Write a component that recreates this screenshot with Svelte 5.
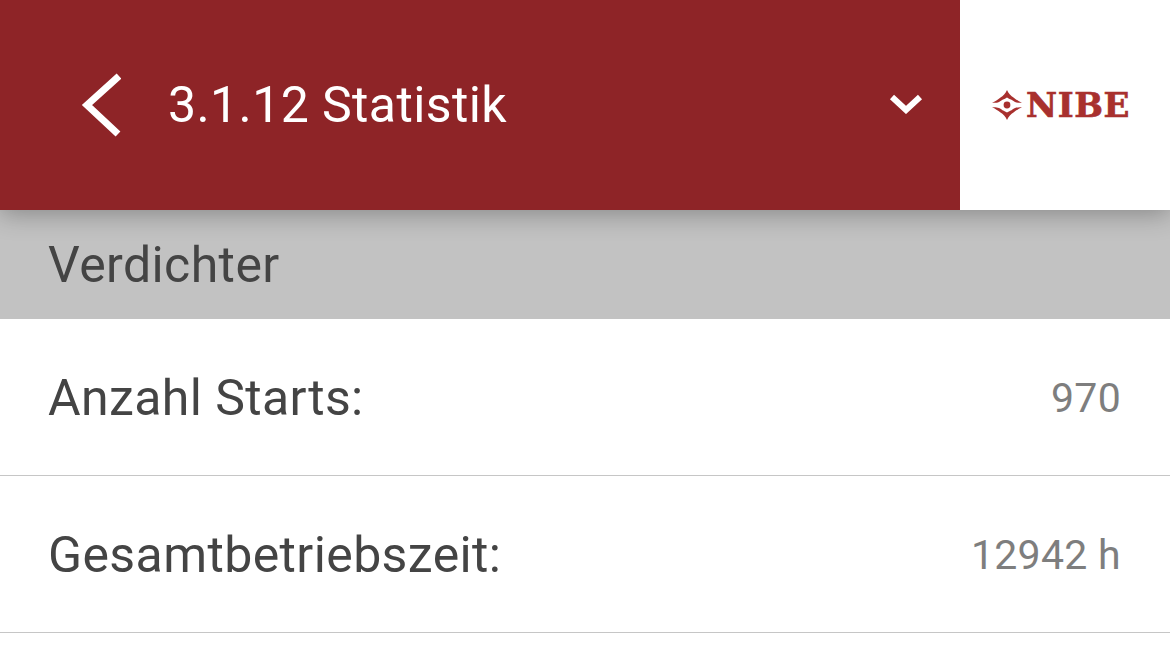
<script>
  const rows = [
    { label: 'Anzahl Starts:', value: '970' },
    { label: 'Gesamtbetriebszeit:', value: '12942 h' }
  ];
</script>

<div class="page">
  <header class="header">
    <div class="bar">
      <svg class="back" width="40" height="64" viewBox="0 0 40 64" aria-hidden="true">
        <path d="M38 3 L6 32 L37 61" fill="none" stroke="#fff" stroke-width="7" />
      </svg>
      <h1 class="title">3.1.12 Statistik</h1>
      <svg class="chevron" width="34" height="20" viewBox="0 0 34 20" aria-hidden="true">
        <path d="M3 3 L17 16 L31 3" fill="none" stroke="#fff" stroke-width="6" />
      </svg>
    </div>
    <div class="brand">
      <svg class="mark" width="30" height="30" viewBox="0 0 30 30" aria-hidden="true">
        <g fill="#a8302e">
          <circle cx="15" cy="15" r="3.400" />
          <path d="M15 0 C16.500 3.500 19 6 21.500 7.500 C24 9.500 27 11.500 30 12.800 C27 13 25 12.800 23 12 C21.500 11.300 20.500 10.500 19.500 9.800 C17.800 9 16 8.300 15 7.500 C14 8.300 12.200 9 10.500 9.800 C9.500 10.500 8.500 11.300 7 12 C5 12.800 3 13 0 12.800 C3 11.500 6 9.500 8.500 7.500 C11 6 13.500 3.500 15 0 Z" />
          <path d="M15 30 C16.500 26.500 19 24 21.500 22.500 C24 20.500 27 18.500 30 17.200 C27 17 25 17.200 23 18 C21.500 18.700 20.500 19.500 19.500 20.200 C17.800 21 16 21.700 15 22.500 C14 21.700 12.200 21 10.500 20.200 C9.500 19.500 8.500 18.700 7 18 C5 17.200 3 17 0 17.200 C3 18.500 6 20.500 8.500 22.500 C11 24 13.500 26.500 15 30 Z" />
        </g>
      </svg>
      <span class="wordmark">NIBE</span>
    </div>
  </header>

  <section class="section">Verdichter</section>

  {#each rows as row}
    <div class="row">
      <span class="label">{row.label}</span>
      <span class="value">{row.value}</span>
    </div>
  {/each}
</div>

<style>
  :global(body) {
    margin: 0;
    background: #fff;
  }
  .page {
    width: 1170px;
    height: 665px;
    overflow: hidden;
    font-family: Roboto, "Liberation Sans", sans-serif;
    background: #fff;
  }
  .header {
    display: flex;
    height: 210px;
    position: relative;
    z-index: 1;
    box-shadow: 0 4px 24px rgba(0, 0, 0, 0.3);
  }
  .bar {
    width: 960px;
    display: flex;
    align-items: center;
    background: #8e2427;
    padding-left: 81px;
    padding-right: 37px;
    box-sizing: border-box;
  }
  .back {
    flex: none;
  }
  .title {
    flex: 1;
    margin: 0 0 0 47px;
    font-size: 50px;
    font-weight: 400;
    letter-spacing: 0.4px;
    color: #fff;
  }
  .chevron {
    flex: none;
    margin-bottom: 2px;
  }
  .brand {
    flex: 1;
    display: flex;
    align-items: center;
    gap: 4px;
    padding-left: 32px;
    background: #fff;
  }
  .wordmark {
    font-family: "DejaVu Serif", serif;
    font-weight: 700;
    font-size: 34px;
    line-height: 1;
    color: #a8302e;
    letter-spacing: 0.6px;
    -webkit-text-stroke: 0.7px #a8302e;
  }
  .section {
    height: 109px;
    display: flex;
    align-items: center;
    padding-left: 48px;
    background: #c2c2c2;
    color: #444;
    font-size: 50px;
    letter-spacing: 0.4px;
  }
  .row {
    height: 157px;
    box-sizing: border-box;
    display: flex;
    align-items: center;
    justify-content: space-between;
    padding: 1px 49px 0 48px;
    border-bottom: 1px solid #c6c6c6;
    background: #fff;
  }
  .label {
    font-size: 50px;
    letter-spacing: 0.4px;
    color: #444;
  }
  .value {
    font-size: 41px;
    letter-spacing: 0.3px;
    color: #7e7e7e;
  }
</style>
